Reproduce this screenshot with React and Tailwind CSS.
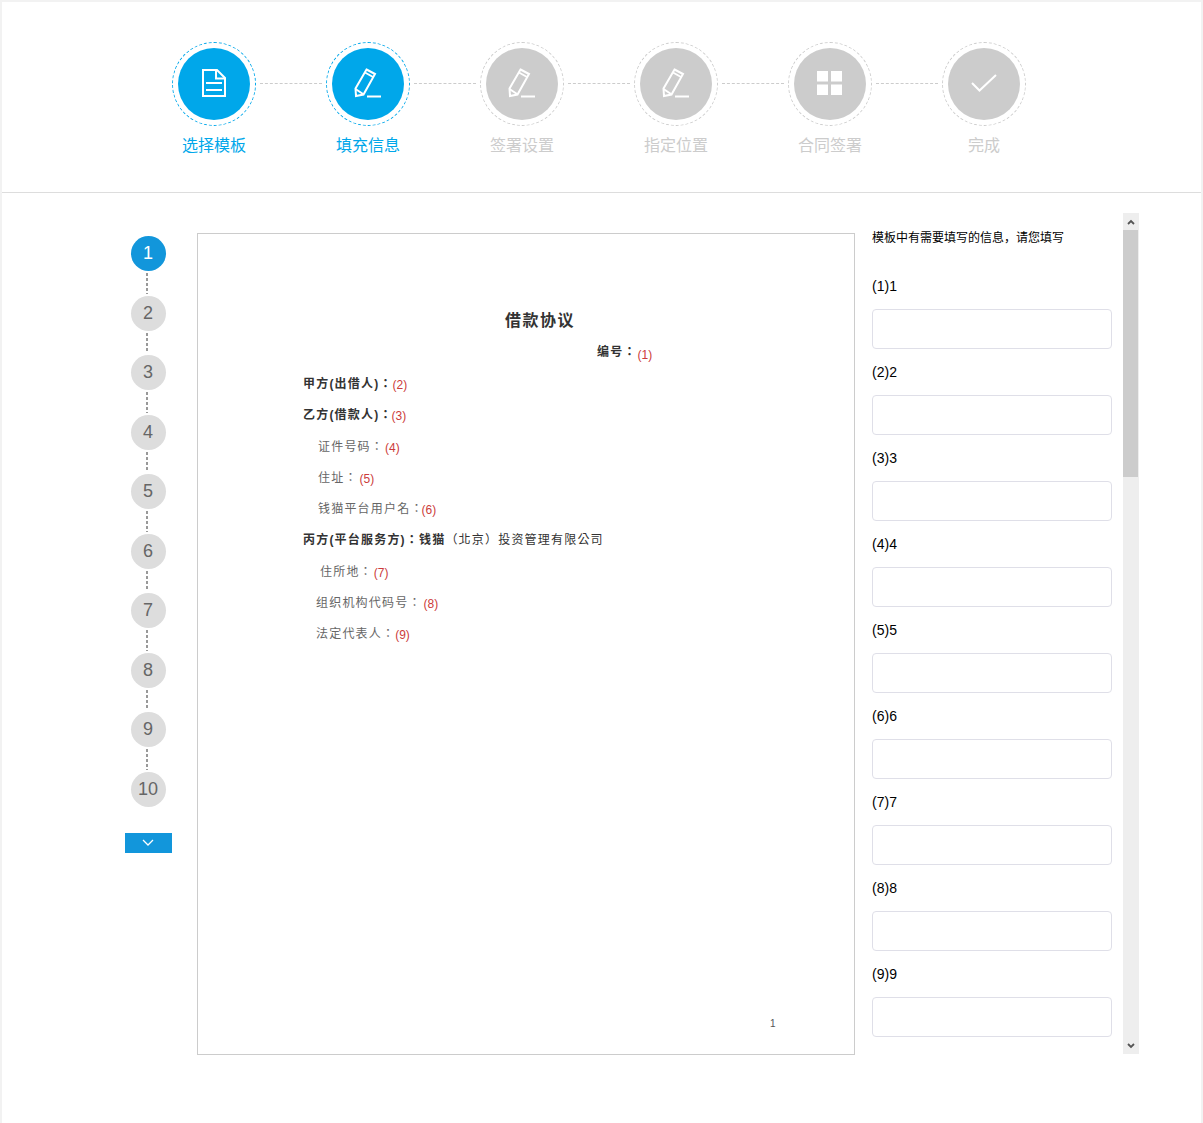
const FONT = "font-['Liberation_Sans','Noto_Sans_CJK_SC',sans-serif]";
const DOC_FONT = "font-['Liberation_Sans','Noto_Sans_CJK_TC',sans-serif]";

function DocIcon() {
  return (
    <svg className="mb-[2px]" width="24" height="28" viewBox="0 0 24 28" fill="none" stroke="white" strokeWidth="2">
      <path d="M1 1H15L23 9V27H1Z" />
      <path d="M14 1V9.5H23" />
      <path d="M4 14H20M4 21H20" />
    </svg>
  );
}

function PenIcon() {
  return (
    <svg className="mb-[2px]" width="28" height="30" viewBox="0 0 28 30" fill="none" stroke="white" strokeWidth="2">
      <path d="M12.5 1.5L21 6L9.5 26.5L2 28L1.5 20.5Z" />
      <path d="M11 4.5L19 9" />
      <path d="M1.5 21L9 26" />
      <path d="M13 28.5H27" />
    </svg>
  );
}

function GridIcon() {
  return (
    <svg className="mb-[2px] mr-[2px]" width="25" height="24" viewBox="0 0 25 24" fill="white">
      <rect x="0" y="0" width="11" height="10.5" />
      <rect x="14" y="0" width="11" height="10.5" />
      <rect x="0" y="13.5" width="11" height="10.5" />
      <rect x="14" y="13.5" width="11" height="10.5" />
    </svg>
  );
}

function CheckIcon() {
  return (
    <svg className="mb-[2px]" width="26" height="18" viewBox="0 0 26 18" fill="none" stroke="white" strokeWidth="2">
      <path d="M1 9L8.5 16.5L25 1" />
    </svg>
  );
}

const steps = [
  { label: "选择模板", icon: <DocIcon />, active: true },
  { label: "填充信息", icon: <PenIcon />, active: true },
  { label: "签署设置", icon: <PenIcon /> },
  { label: "指定位置", icon: <PenIcon /> },
  { label: "合同签署", icon: <GridIcon /> },
  { label: "完成", icon: <CheckIcon /> },
];

function Ring({ step, last }) {
  return (
    <>
      <div
        className={
          step.active
            ? "flex h-[84px] w-[84px] items-center justify-center rounded-full border border-dashed border-[#00a7ea]"
            : "flex h-[84px] w-[84px] items-center justify-center rounded-full border border-dashed border-[#cccccc]"
        }
      >
        <div
          className={
            step.active
              ? "flex h-[72px] w-[72px] items-center justify-center rounded-full bg-[#00a7ea]"
              : "flex h-[72px] w-[72px] items-center justify-center rounded-full bg-[#cccccc]"
          }
        >
          {step.icon}
        </div>
      </div>
      {!last && <div className="mx-[4px] mb-[2px] w-[62px] border-t border-dashed border-[#cccccc]" />}
    </>
  );
}

function Dot({ n, active, last }) {
  return (
    <div className="flex flex-col items-center">
      <div
        className={
          active
            ? "flex h-[35px] w-[35px] items-center justify-center rounded-full bg-[#1296db] pr-[1px] text-[18px] text-white"
            : "flex h-[35px] w-[35px] items-center justify-center rounded-full bg-[#dddddd] pr-[1px] text-[18px] text-[#666666]"
        }
      >
        {n}
      </div>
      {!last && (
        <div className="my-[2px] mr-[3px] h-[20.5px] w-[2px] bg-[repeating-linear-gradient(to_bottom,#999999_0,#999999_3px,transparent_3px,transparent_5px)]" />
      )}
    </div>
  );
}

function Red({ children, className = "align-[-1px]" }) {
  return <span className={`font-normal leading-none tracking-normal text-[#cc3b3b] ${className}`}>{children}</span>;
}

const boldLine = "h-[31.3px] text-[12px] leading-[31.3px] font-bold tracking-[1.2px] text-[#333333] whitespace-nowrap";
const plainLine = "h-[31.3px] text-[12px] leading-[31.3px] tracking-[1.2px] text-[#666666] whitespace-nowrap";

const fields = [1, 2, 3, 4, 5, 6, 7, 8, 9];

export default function App() {
  return (
    <div className={`${FONT} flex h-[1123px] w-[1203px] flex-col overflow-hidden border-x-2 border-t-2 border-[#f2f2f2] bg-white`}>
      <header className="flex h-[191px] flex-col border-b border-[#dddddd] pl-[135px] pt-[40px]">
        <div className="flex items-center pl-[35px]">
          {steps.map((s, i) => (
            <Ring key={s.label} step={s} last={i === steps.length - 1} />
          ))}
        </div>
        <div className="mt-[9px] flex">
          {steps.map((s) => (
            <div
              key={s.label}
              className={
                s.active
                  ? "w-[154px] text-center text-[16px] leading-[22px] text-[#00a7ea]"
                  : "w-[154px] text-center text-[16px] leading-[22px] text-[#cccccc]"
              }
            >
              {s.label}
            </div>
          ))}
        </div>
      </header>

      <main className="flex pl-[123px] pt-[20px]">
        <aside className="flex w-[47px] flex-col items-center pt-[23px]">
          {[1, 2, 3, 4, 5, 6, 7, 8, 9, 10].map((n) => (
            <Dot key={n} n={n} active={n === 1} last={n === 10} />
          ))}
          <button className="mt-[26px] flex h-[20px] w-[47px] items-center justify-center bg-[#1296db] pr-[1px]">
            <svg width="12" height="7" viewBox="0 0 12 7" fill="none" stroke="white" strokeWidth="1.3">
              <path d="M1 1L6 6L11 1" />
            </svg>
          </button>
        </aside>

        <section className={`${DOC_FONT} ml-[25px] mt-[20px] flex h-[822px] w-[658px] flex-col border border-[#cccccc] pt-[71px]`}>
          <div className="h-[32px] pl-[307px] text-[16px] leading-[32px] font-bold tracking-[1.5px] text-[#333333]">借款协议</div>
          <div className="h-[32px] pl-[399px] text-[12px] leading-[30px] font-bold tracking-[1.2px] text-[#333333] whitespace-nowrap">
            编号：<Red className="ml-[1px] align-[-3px]">(1)</Red>
          </div>
          <div className={`${boldLine} pl-[105px]`}>甲方(出借人)：<Red>(2)</Red></div>
          <div className={`${boldLine} pl-[105px]`}>乙方(借款人)：<Red className="-ml-[1px] align-[-1px]">(3)</Red></div>
          <div className={`${plainLine} pl-[120px]`}>证件号码：<Red className="ml-[1px] align-[-1px]">(4)</Red></div>
          <div className={`${plainLine} pl-[120px]`}>住址：<Red className="ml-[2px] align-[-1px]">(5)</Red></div>
          <div className={`${plainLine} pl-[120px]`}>钱猫平台用户名：<Red className="-ml-[2px] align-[-1px]">(6)</Red></div>
          <div className={`${boldLine} pl-[105px]`}>丙方(平台服务方)：钱猫<span className="font-normal">（北京）投资管理有限公司</span></div>
          <div className={`${plainLine} pl-[122px]`}>住所地：<Red className="ml-[1px] align-[-1px]">(7)</Red></div>
          <div className={`${plainLine} pl-[118px]`}>组织机构代码号：<Red className="ml-[2px] align-[-1px]">(8)</Red></div>
          <div className={`${plainLine} pl-[118px]`}>法定代表人：<Red>(9)</Red></div>
          <div className="mt-auto pb-[23px] pl-[572px] text-[10px] leading-[14px] text-[#555555]">1</div>
        </section>

        <div className="ml-[17px] flex h-[841px] w-[267px] overflow-hidden">
          <div className="w-[251px] pt-[16px]">
            <div className="text-[12px] leading-[18px] text-black whitespace-nowrap">模板中有需要填写的信息，请您填写</div>
            <div className="pt-[29px]">
              {fields.map((n) => (
                <div key={n} className="h-[86px]">
                  <div className="h-[33px] text-[14px] leading-[20px] text-black">({n}){n}</div>
                  <div className="h-[40px] w-[240px] rounded-[4px] border border-[#dfdfe8] bg-white" />
                </div>
              ))}
            </div>
          </div>

          <div className="flex h-[841px] w-[16px] flex-col bg-[#eeeeee]">
            <div className="flex h-[17px] w-full items-center justify-center">
              <svg width="8" height="6" viewBox="0 0 8 6" fill="none" stroke="#555555" strokeWidth="1.8">
                <path d="M1 5L4 2L7 5" />
              </svg>
            </div>
            <div className="h-[247px] w-[15px] bg-[#cccccc]" />
            <div className="flex-1" />
            <div className="flex h-[17px] w-full items-center justify-center">
              <svg width="8" height="6" viewBox="0 0 8 6" fill="none" stroke="#555555" strokeWidth="1.8">
                <path d="M1 1L4 4L7 1" />
              </svg>
            </div>
          </div>
        </div>
      </main>
    </div>
  );
}
